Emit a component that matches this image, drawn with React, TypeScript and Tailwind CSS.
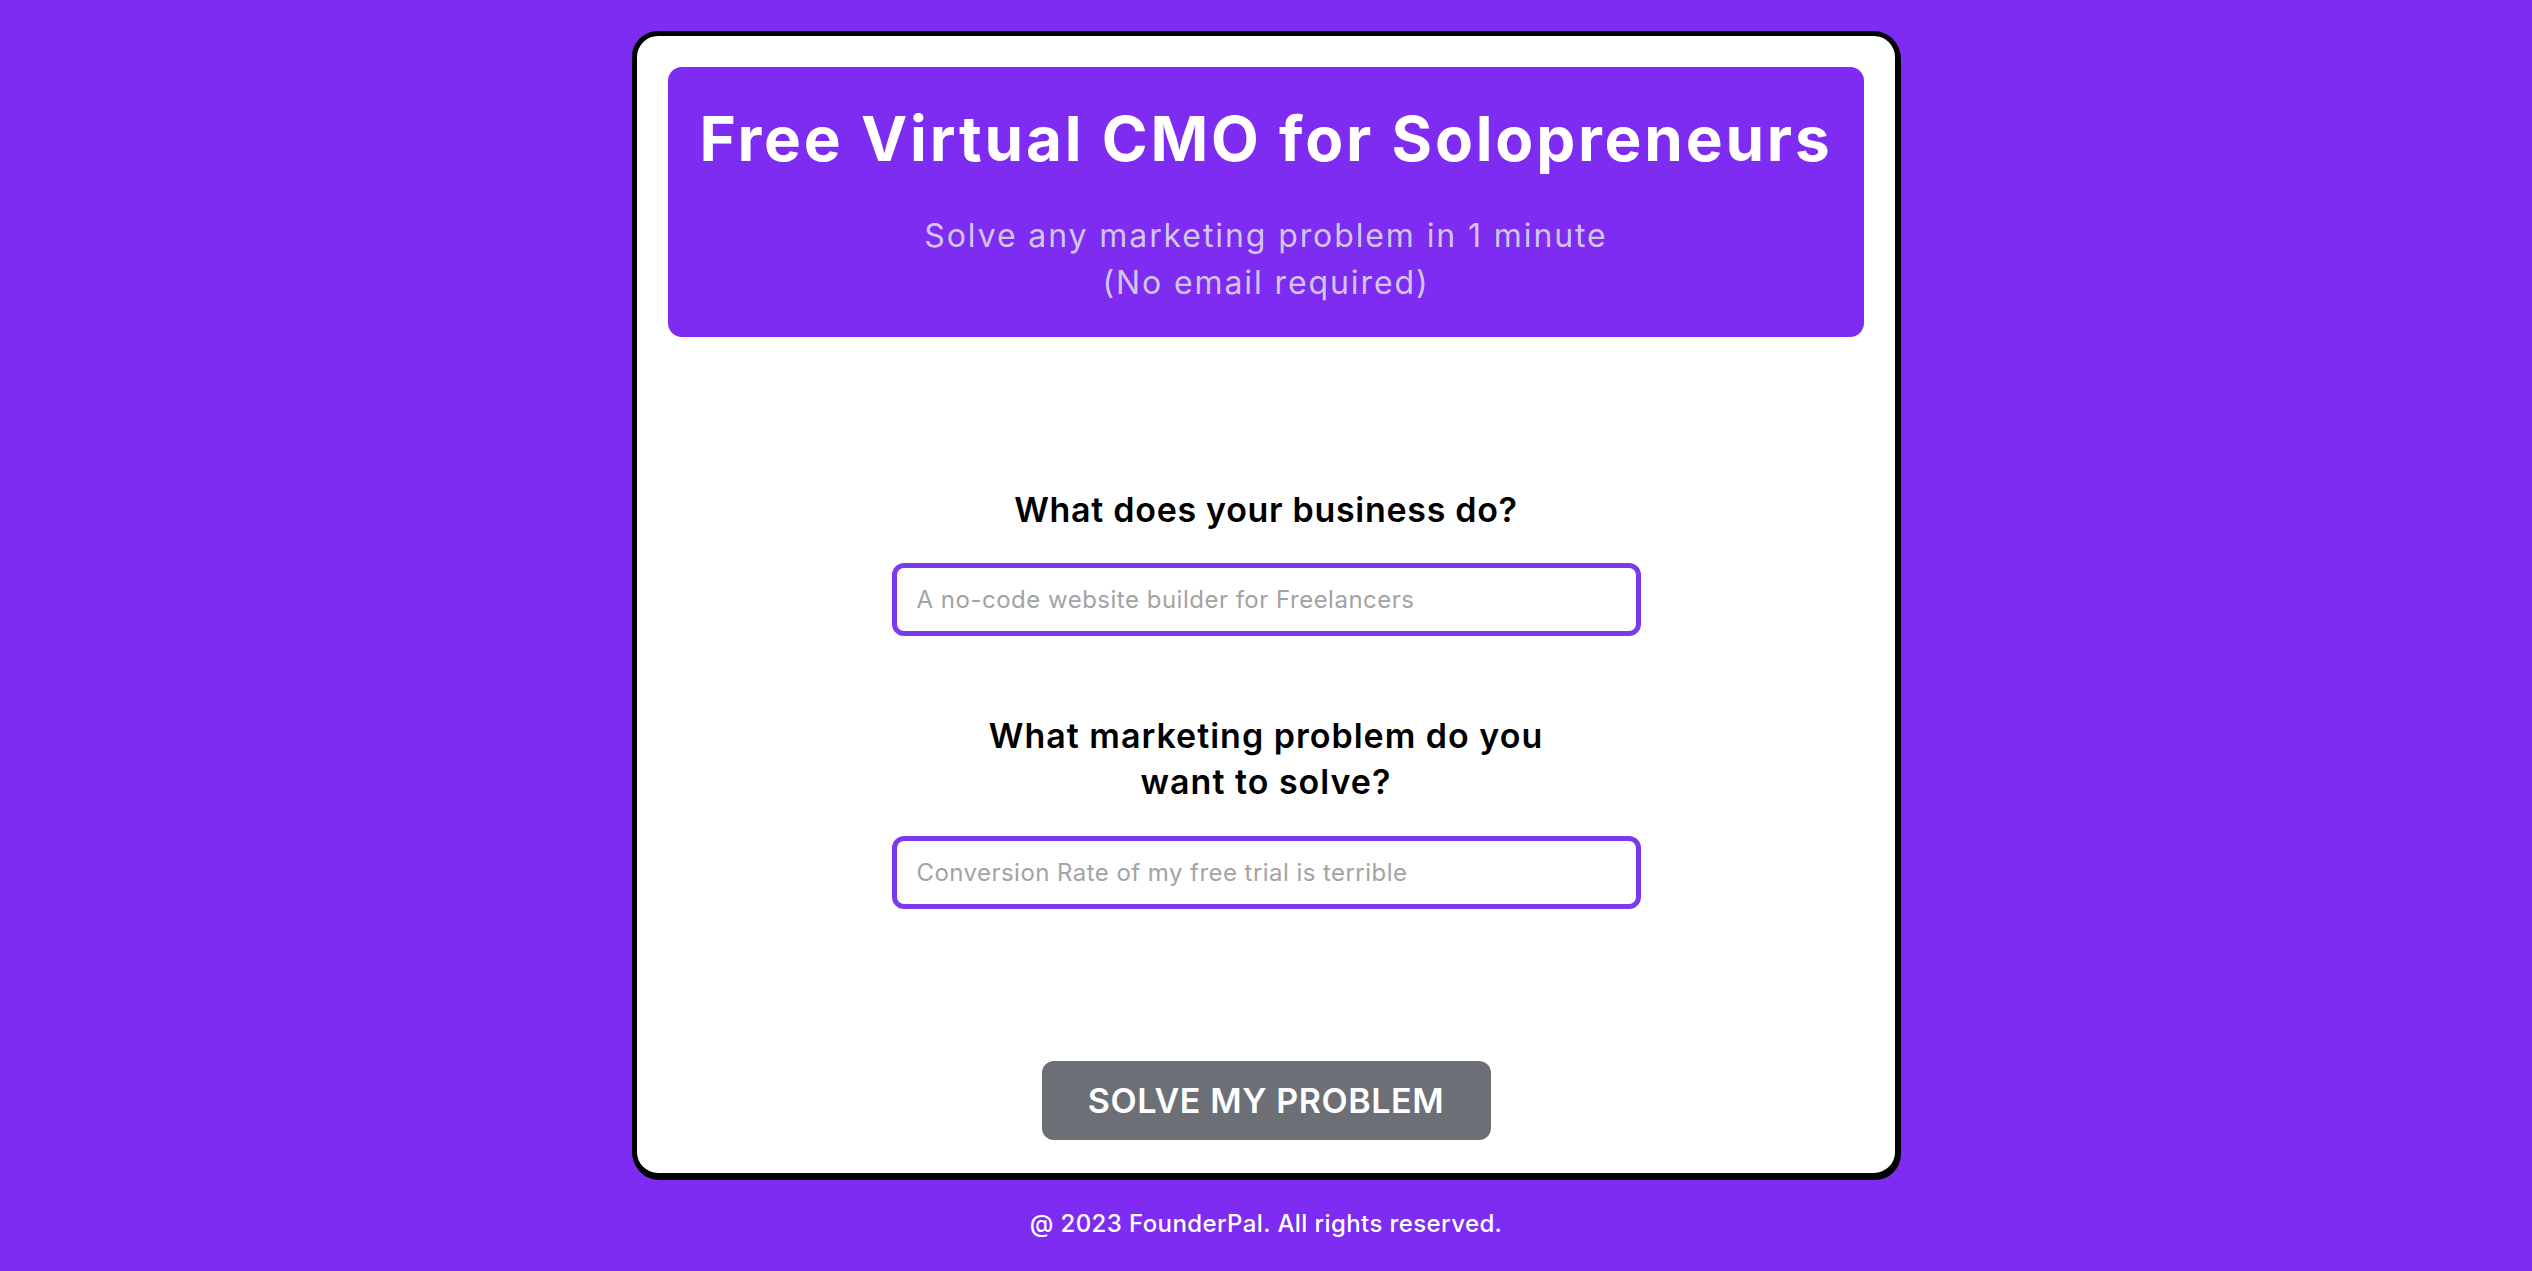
import React from "react";

const FONT = { fontFamily: "Inter, 'Noto Sans', sans-serif" };

export default function App() {
  return (
    <div
      className="min-h-screen w-full bg-[#7e2bf2] flex flex-col items-center pt-[31px]"
      style={FONT}
    >
      <div className="w-[1268px] h-[1147px] bg-white border-[5px] border-black rounded-[26px] shadow-[1px_2px_0_#000] px-[31px] pt-[31px] flex flex-col items-center">
        {/* header */}
        <div className="w-full h-[270px] bg-[#7e2bf2] rounded-[14px] flex flex-col items-center pt-[36px]">
          <h1 className="text-[62px] leading-[72px] font-bold text-white tracking-[2.8px] whitespace-nowrap">
            Free Virtual CMO for Solopreneurs
          </h1>
          <p className="mt-[37px] text-[32px] leading-[47px] text-[#d1c5ec] text-center tracking-[1.9px]">
            Solve any marketing problem in 1 minute
            <br />
            (No email required)
          </p>
        </div>

        {/* form */}
        <div className="mt-[150px] w-[749px] flex flex-col items-center">
          <label className="text-[34px] leading-[46px] font-semibold text-black text-center tracking-[0.7px]">
            What does your business do?
          </label>
          <input
            className="mt-[30px] w-full h-[73px] border-[5px] border-[#7c3aed] rounded-[12px] px-[20px] text-[24px] tracking-[0.5px] text-gray-800 placeholder:text-[#a3a3a3] outline-none"
            placeholder="A no-code website builder for Freelancers"
          />
          <label className="mt-[77px] text-[34px] leading-[46px] font-semibold text-black text-center tracking-[1px]">
            What marketing problem do you
            <br />
            want to solve?
          </label>
          <input
            className="mt-[31px] w-full h-[73px] border-[5px] border-[#7c3aed] rounded-[12px] px-[20px] text-[24px] tracking-[0.45px] text-gray-800 placeholder:text-[#a3a3a3] outline-none"
            placeholder="Conversion Rate of my free trial is terrible"
          />
        </div>

        <button className="mt-[152px] w-[449px] h-[79px] bg-[#6c6f76] rounded-[12px] text-white text-[34px] font-semibold uppercase tracking-[0.6px]">
          Solve my problem
        </button>
      </div>

      <p className="mt-[28px] text-[24px] leading-[36px] font-medium text-white tracking-[0.4px]">
        @ 2023 FounderPal. All rights reserved.
      </p>
    </div>
  );
}
